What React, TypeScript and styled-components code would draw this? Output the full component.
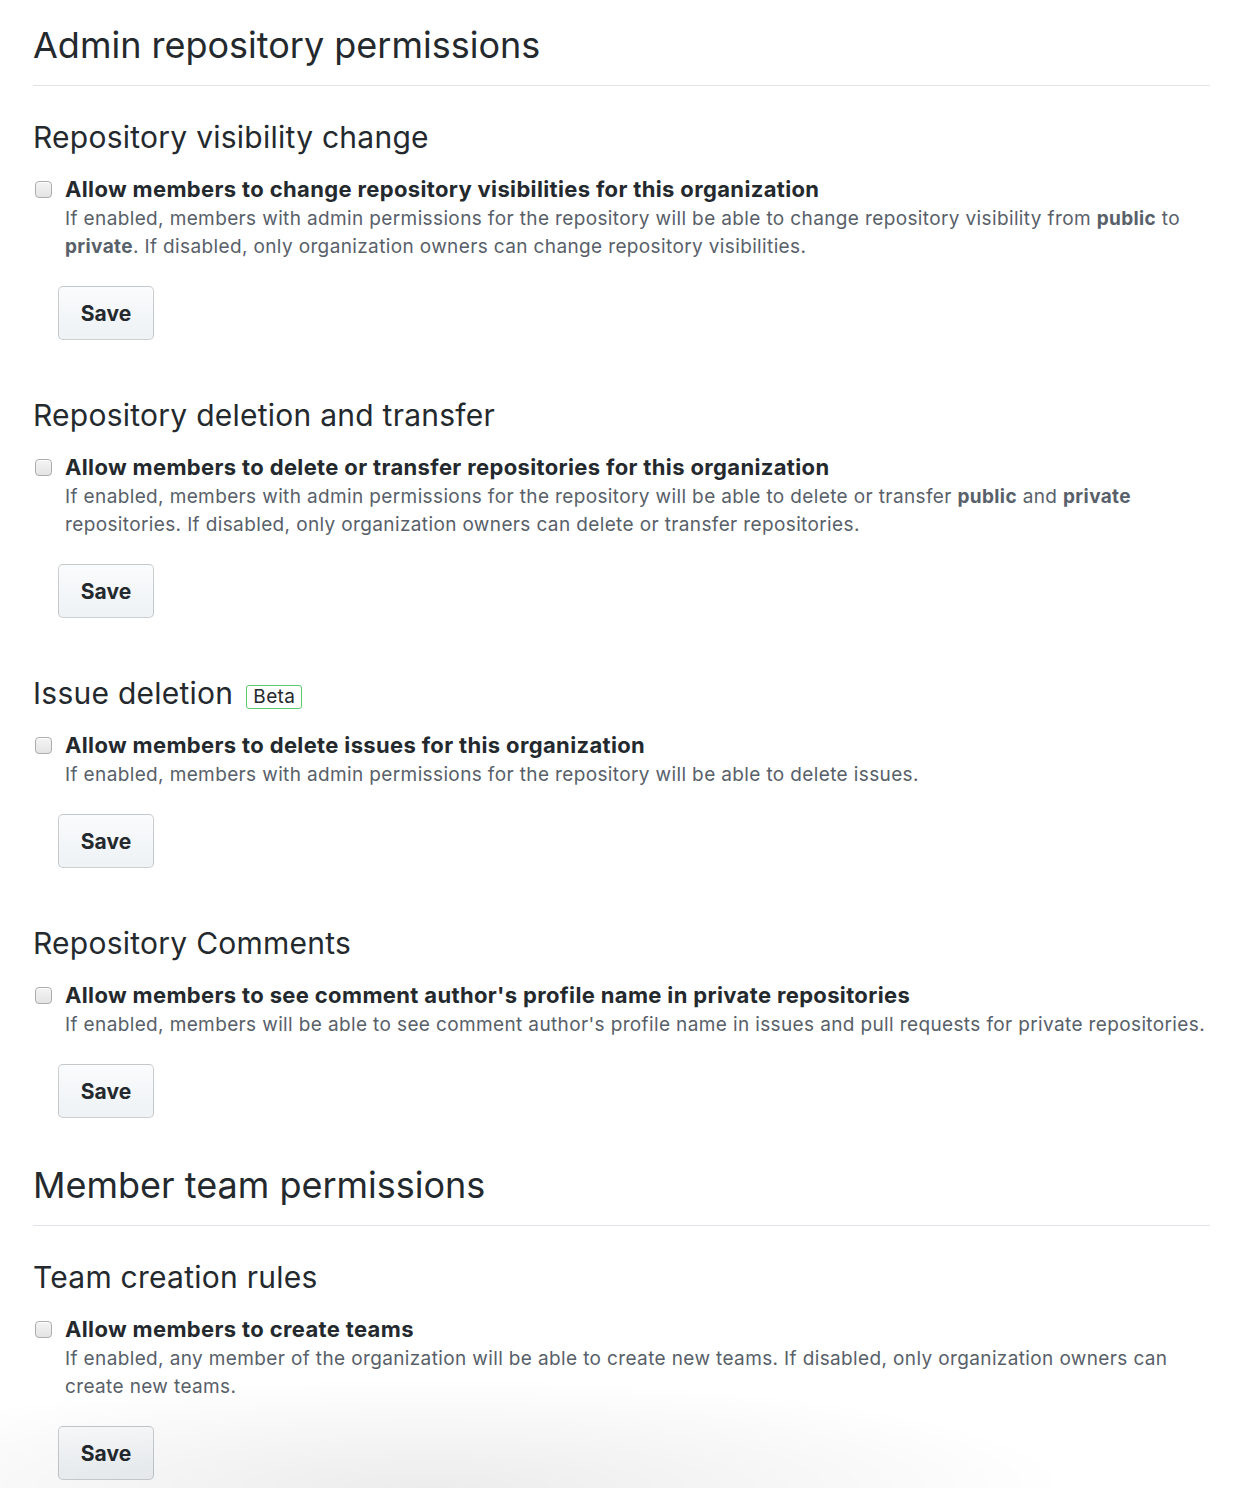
import styled, { createGlobalStyle } from "styled-components";

const GlobalStyle = createGlobalStyle`
  body {
    margin: 0;
    background: #fff;
    font-family: Inter, "Noto Sans", "Liberation Sans", sans-serif;
    color: #24292e;
  }
`;

interface Setting {
  title: string;
  beta?: boolean;
  label: string;
  note: React.ReactNode;
}

const adminSettings: Setting[] = [
  {
    title: "Repository visibility change",
    label: "Allow members to change repository visibilities for this organization",
    note: (
      <>
        If enabled, members with admin permissions for the repository will be able to change
        repository visibility from <strong>public</strong> to <strong>private</strong>. If disabled,
        only organization owners can change repository visibilities.
      </>
    ),
  },
  {
    title: "Repository deletion and transfer",
    label: "Allow members to delete or transfer repositories for this organization",
    note: (
      <>
        If enabled, members with admin permissions for the repository will be able to delete or
        transfer <strong>public</strong> and <strong>private</strong> repositories. If disabled, only
        organization owners can delete or transfer repositories.
      </>
    ),
  },
  {
    title: "Issue deletion",
    beta: true,
    label: "Allow members to delete issues for this organization",
    note: (
      <>
        If enabled, members with admin permissions for the repository will be able to delete
        issues.
      </>
    ),
  },
  {
    title: "Repository Comments",
    label: "Allow members to see comment author's profile name in private repositories",
    note: (
      <>
        If enabled, members will be able to see comment author's profile name in issues and pull
        requests for private repositories.
      </>
    ),
  },
];

const teamSettings: Setting[] = [
  {
    title: "Team creation rules",
    label: "Allow members to create teams",
    note: (
      <>
        If enabled, any member of the organization will be able to create new teams. If disabled,
        only organization owners can create new teams.
      </>
    ),
  },
];

const SettingBlock = ({ setting }: { setting: Setting }) => (
  <Section>
    <SectionTitle>
      {setting.title}
      {setting.beta && <BetaLabel>Beta</BetaLabel>}
    </SectionTitle>
    <CheckRow>
      <Checkbox type="checkbox" />
      <CheckText>
        <CheckLabel>{setting.label}</CheckLabel>
        <Note>{setting.note}</Note>
      </CheckText>
    </CheckRow>
    <SaveButton>Save</SaveButton>
  </Section>
);

export default function App() {
  return (
    <>
      <GlobalStyle />
      <Page>
        <Subhead first>
          <SubheadHeading>Admin repository permissions</SubheadHeading>
        </Subhead>
        {adminSettings.map((s) => (
          <SettingBlock key={s.title} setting={s} />
        ))}
        <Subhead>
          <SubheadHeading>Member team permissions</SubheadHeading>
        </Subhead>
        {teamSettings.map((s) => (
          <SettingBlock key={s.title} setting={s} />
        ))}
      </Page>
      <BottomShade />
    </>
  );
}

const Page = styled.div`
  padding: 23px 28px 9px 33px;
`;

const Subhead = styled.div<{ first?: boolean }>`
  margin-top: ${(p) => (p.first ? "0" : "21px")};
  padding-bottom: 17px;
  border-bottom: 1px solid #e1e4e8;
`;

const SubheadHeading = styled.h2`
  margin: 0;
  font-size: 36px;
  font-weight: 400;
  line-height: 45px;
`;

const Section = styled.div`
  padding-top: 32px;
  padding-bottom: 24px;
`;

const SectionTitle = styled.h3`
  margin: 0;
  display: flex;
  align-items: center;
  font-size: 30px;
  font-weight: 400;
  line-height: 38px;
  letter-spacing: 0.25px;
`;

const BetaLabel = styled.span`
  margin-left: 13px;
  margin-top: 8px;
  padding: 0 6px;
  height: 22px;
  display: inline-flex;
  align-items: center;
  font-size: 19px;
  line-height: 22px;
  letter-spacing: 0.4px;
  color: #24292e;
  border: 1.5px solid #5ccc6a;
  border-radius: 3px;
`;

const CheckRow = styled.div`
  margin-top: 18px;
  margin-right: -8px;
  display: flex;
  align-items: flex-start;
`;

const Checkbox = styled.input`
  appearance: none;
  margin: 7px 14px 0 2px;
  width: 17px;
  height: 17px;
  flex-shrink: 0;
  border: 1px solid #acacac;
  border-radius: 4px;
  background: linear-gradient(#f4f4f4, #e4e4e4);
  box-shadow: inset 0 1px 0 #fff;
`;

const CheckText = styled.div`
  flex: 1;
  margin-left: -1px;
`;

const CheckLabel = styled.div`
  font-size: 22px;
  font-weight: 700;
  line-height: 31px;
  letter-spacing: 0.35px;
`;

const Note = styled.p`
  margin: 0;
  font-size: 19px;
  line-height: 28px;
  color: #586069;
  letter-spacing: 0.37px;

  strong {
    font-weight: 700;
  }
`;

const SaveButton = styled.button`
  margin: 25px 0 0 25px;
  width: 96px;
  height: 54px;
  display: block;
  font-family: inherit;
  font-size: 21px;
  font-weight: 700;
  color: #24292e;
  background: linear-gradient(#fafbfc, #eff3f6 90%);
  border: 1.5px solid rgba(27, 31, 35, 0.2);
  border-radius: 5px;
`;

const BottomShade = styled.div`
  position: fixed;
  left: 0;
  bottom: 0;
  width: 1238px;
  height: 110px;
  pointer-events: none;
  background: radial-gradient(
    ellipse 640px 110px at 430px 100%,
    rgba(0, 0, 0, 0.075),
    rgba(0, 0, 0, 0.02) 75%,
    rgba(0, 0, 0, 0) 100%
  );
`;
